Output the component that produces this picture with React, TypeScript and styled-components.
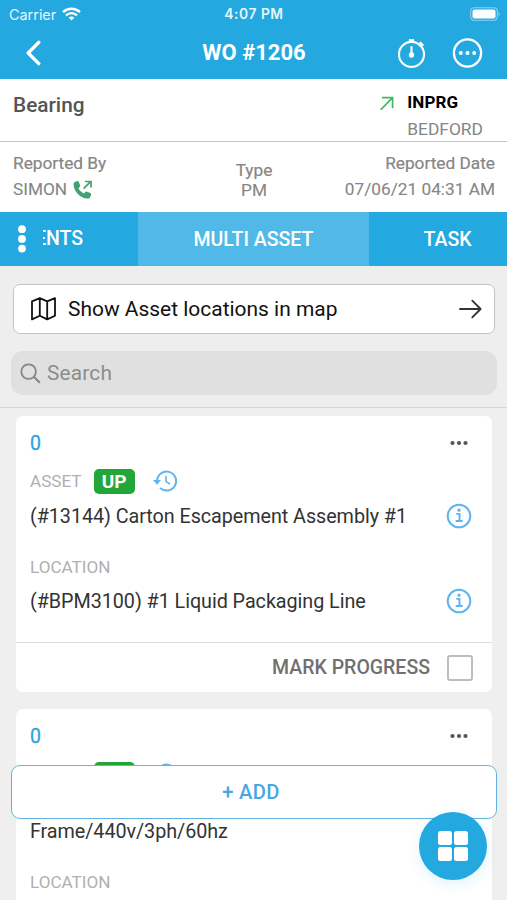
import React from "react";
import styled, { createGlobalStyle } from "styled-components";

const BLUE = "#24a8e0";
const LIGHT_BLUE = "#51b9e8";

const GlobalStyle = createGlobalStyle`
  *, *::before, *::after { box-sizing: border-box; }
  body { margin: 0; background: #efefef; font-family: Roboto, sans-serif; }
  svg { display: block; flex: none; }
  button { font: inherit; padding: 0; border: 0; background: none; color: inherit; }
`;

const Screen = styled.div`
  position: relative;
  display: flex;
  flex-direction: column;
  width: 507px;
  height: 900px;
  overflow: hidden;
  background: #efefef;

  > * {
    flex-shrink: 0;
  }
`;

const StatusBar = styled.div`
  display: grid;
  grid-template-columns: 1fr auto 1fr;
  align-items: center;
  height: 27px;
  padding: 0 6px 0 9px;
  background: ${BLUE};
  color: #e6f6fd;
  font-family: Inter, sans-serif;
  line-height: 27px;
`;

const Carrier = styled.div`
  display: flex;
  align-items: center;
  gap: 6px;
  font-size: 14.4px;
`;

const Clock = styled.div`
  padding-top: 1px;
  padding-right: 2px;
  font-size: 13.8px;
  font-weight: 600;
  letter-spacing: 0.55px;
`;

const BatterySlot = styled.div`
  justify-self: end;
`;

const NavBar = styled.header`
  display: grid;
  grid-template-columns: 1fr auto 1fr;
  align-items: center;
  height: 52px;
  padding: 0 24px 0 25px;
  background: ${BLUE};
  color: #fff;
`;

const NavTitle = styled.h1`
  margin: 0;
  font-size: 22px;
  font-weight: 700;
  line-height: 50px;
`;

const NavActions = styled.div`
  display: flex;
  justify-content: flex-end;
  gap: 25px;
`;

const Summary = styled.section`
  display: flex;
  justify-content: space-between;
  height: 63px;
  padding: 12px 24px 0 13px;
  background: #fff;
  border-bottom: 1.5px solid #c2c2c2;
`;

const SummaryTitle = styled.h2`
  margin: 0;
  font-size: 20.8px;
  font-weight: 500;
  line-height: 28px;
  color: #555;
`;

const StatusBlock = styled.div`
  display: grid;
  grid-template-columns: 14px auto;
  column-gap: 13px;
  align-items: center;
  align-content: start;
  margin-top: -2px;
`;

const StatusText = styled.strong`
  font-size: 17px;
  line-height: 27px;
  letter-spacing: 0.15px;
  color: #000;
`;

const Site = styled.span`
  grid-column: 2;
  font-size: 17.4px;
  line-height: 26px;
  color: #858585;
`;

const Facts = styled.section`
  display: flex;
  justify-content: space-between;
  height: 70px;
  padding: 8px 12px 0 13px;
  background: #fff;
`;

const Fact = styled.div<{ $align: "left" | "center" | "right" }>`
  display: flex;
  flex-direction: column;
  flex: ${(p) => (p.$align === "center" ? "none" : "1 1 0")};
  padding-top: ${(p) => (p.$align === "center" ? "10px" : "0")};
  text-align: ${(p) => p.$align};
  color: #868686;
  font-size: 17.25px;
`;

const FactLabel = styled.span<{ $tight?: boolean }>`
  line-height: ${(p) => (p.$tight ? "20px" : "26px")};
  -webkit-text-stroke: 0.2px currentColor;
`;

const FactValue = styled.span<{ $tight?: boolean }>`
  display: ${(p) => (p.$tight ? "block" : "flex")};
  align-items: center;
  justify-content: inherit;
  gap: 6px;
  line-height: ${(p) => (p.$tight ? "20px" : "27px")};
  -webkit-text-stroke: 0.1px currentColor;
`;

const RightValue = styled(FactValue)`
  justify-content: flex-end;
`;

const Tabs = styled.nav`
  display: flex;
  height: 54px;
  background: ${BLUE};
  color: #fff;
  font-size: 19.5px;
  font-weight: 500;
  line-height: 56px;
`;

const OverflowTab = styled.div`
  display: flex;
  flex: none;
  align-items: center;
  gap: 17px;
  width: 138px;
  padding-left: 18px;
`;

const ClippedLabel = styled.span`
  display: flex;
  justify-content: flex-end;
  width: 40px;
  overflow: hidden;
  white-space: nowrap;
`;

const Tab = styled.div<{ $width: number; $active?: boolean }>`
  flex: none;
  width: ${(p) => p.$width}px;
  text-align: center;
  background: ${(p) => (p.$active ? LIGHT_BLUE : BLUE)};
`;

const Tools = styled.section`
  display: flex;
  flex-direction: column;
  gap: 17px;
  height: 142px;
  padding: 18px 10px 0 11px;
  border-bottom: 1.5px solid #d6d6d6;
  background: #eee;
`;

const MapButton = styled.button`
  display: flex;
  align-items: center;
  height: 50px;
  margin: 0 2px 0 1.5px;
  padding: 0 12px 0 17.5px;
  border: 1.5px solid #c4c4c4;
  border-radius: 7px;
  background: #fff;
  color: #111;
`;

const MapLabel = styled.span`
  flex: 1;
  margin-left: 12px;
  font-size: 20.95px;
  text-align: left;
`;

const SearchBox = styled.div`
  display: flex;
  align-items: center;
  gap: 6px;
  height: 44px;
  padding-left: 9px;
  border-radius: 12px;
  background: #e0e0e0;
  color: #8c8c8c;
  font-size: 20.8px;
  line-height: 46px;
  letter-spacing: 0.2px;
`;

const AssetList = styled.main`
  display: flex;
  flex-direction: column;
  gap: 17px;
  padding: 8px 15px 0 16px;
`;

const Card = styled.article`
  flex: none;
  border-radius: 7px;
  background: #fff;
`;

const CardBody = styled.div`
  display: flex;
  flex-direction: column;
  height: 226px;
  padding: 12px 20px 0 14px;
`;

const TallCardBody = styled(CardBody)`
  height: 250px;
`;

const CardTop = styled.div`
  display: flex;
  align-items: center;
  justify-content: space-between;
  height: 30px;
  padding-right: 4px;
  color: #2ea3dc;
  font-size: 19.5px;
  -webkit-text-stroke: 0.3px currentColor;
`;

const AssetRow = styled.div`
  display: flex;
  align-items: center;
  height: 26px;
  margin-top: 10px;
`;

const FieldLabel = styled.span`
  font-size: 17.1px;
  line-height: 24px;
  color: #b0b0b0;
`;

const LocationLabel = styled(FieldLabel)`
  margin-top: 26px;
`;

const UpBadge = styled.span`
  width: 41px;
  height: 25px;
  margin: 0 18px 0 12px;
  border-radius: 5px;
  background: #21a637;
  color: #fff;
  font-size: 19px;
  font-weight: 700;
  line-height: 25px;
  text-align: center;
`;

const FieldValue = styled.div<{ $gap: number; $lines?: number }>`
  display: flex;
  align-items: flex-end;
  justify-content: space-between;
  height: ${(p) => (p.$lines === 2 ? 47 : 24)}px;
  margin-top: ${(p) => p.$gap}px;
  font-size: 19.75px;
  line-height: 24px;
  letter-spacing: -0.05px;
  color: #333;
`;

const ProgressRow = styled.div`
  display: flex;
  align-items: center;
  justify-content: flex-end;
  gap: 17px;
  height: 50px;
  padding-right: 19px;
  border-top: 1px solid #ddd;
  color: #707070;
  font-size: 19.5px;
  font-weight: 500;
`;

const Checkbox = styled.span`
  width: 26px;
  height: 26px;
  border: 2px solid #bdbdbd;
  border-radius: 3px;
`;

const AddButton = styled.button`
  position: absolute;
  left: 11px;
  right: 10px;
  top: 765px;
  height: 54px;
  padding-right: 6px;
  border: 1.4px solid #63b3e2;
  border-radius: 9px;
  background: #fff;
  color: #4aa7dd;
  font-size: 20.2px;
  font-weight: 500;
  letter-spacing: 0.3px;
  text-align: center;
`;

const MenuFab = styled.button`
  position: absolute;
  left: 419px;
  top: 812px;
  display: grid;
  place-items: center;
  width: 68px;
  height: 68px;
  border-radius: 50%;
  background: ${BLUE};
  box-shadow: 0 4px 14px rgba(36, 168, 224, 0.14);
`;

const WifiIcon = () => (
  <svg width="19" height="14" viewBox="0 0 19 14" fill="none" stroke="#fff" strokeWidth="2.3">
    <path d="M1 5.2C5.8.6 13.2.6 18 5.2M4 8.4c3.2-3 7.8-3 11 0" />
    <path d="M6.6 10.6c1.7-1.5 4.1-1.5 5.8 0L9.5 13.5z" fill="#fff" stroke="none" />
  </svg>
);

const BatteryIcon = () => (
  <svg width="31" height="14" viewBox="0 0 31 14">
    <rect x=".7" y=".7" width="26.6" height="12.6" rx="3.5" fill="none" stroke="#8bd1ef" strokeWidth="1.1" />
    <rect x="2.5" y="2.5" width="23" height="9" rx="2" fill="#fff" />
    <path d="M28.5 5c1.6.7 1.6 3.3 0 4z" fill="#8bd1ef" />
  </svg>
);

const BackIcon = () => (
  <svg width="18" height="26" viewBox="0 0 18 26" fill="none" stroke="#fff" strokeWidth="3.4" strokeLinecap="round" strokeLinejoin="round">
    <path d="M13.8 2.4 3.2 13l10.6 10.6" />
  </svg>
);

const StopwatchIcon = () => (
  <svg width="30" height="32" viewBox="0 0 30 32" fill="none" stroke="#fff" strokeWidth="2.1" strokeLinecap="round">
    <circle cx="14.5" cy="17.4" r="12.5" />
    <path d="M14.5 10v7.6M12.8 3.1h3.4M22.9 8.4l1.6-1.6M23.4 5.7l2.3 2.3M14.5 3v2" />
    <circle cx="14.5" cy="18" r="1.6" fill="#fff" />
  </svg>
);

const MoreCircleIcon = () => (
  <svg width="31" height="32" viewBox="0 0 31 32">
    <circle cx="15.5" cy="16" r="13.6" fill="none" stroke="#fff" strokeWidth="2.3" />
    <g fill="#fff">
      <circle cx="8.8" cy="16" r="2" />
      <circle cx="15.5" cy="16" r="2" />
      <circle cx="22.2" cy="16" r="2" />
    </g>
  </svg>
);

const DiagonalArrowIcon = () => (
  <svg width="14" height="15" viewBox="0 0 14 15" fill="none" stroke="#3dba5c" strokeWidth="1.7">
    <path d="M.7 14.8 12.5 2.6M2 2.600h10.600v10.700" />
  </svg>
);

const CallIcon = () => (
  <svg width="20" height="20" viewBox="0 0 20 20">
    <path
      d="M2.3 1.8 4 1.2c.8-.3 1.4 0 1.8.8l1.3 3.2c.3.7.1 1.2-.4 1.7L5.5 8.2c1.1 2.3 3 4.1 5.400 5.300l1.500-1.500c.5-.5 1-.6 1.700-.3l3.200 1.400c.8.4 1 1 .7 1.800l-.8 2.200c-.4 1.100-1.500 1.700-3 1.500C7.500 18 1.100 12 .5 4.700c-.1-1.500.6-2.500 1.800-2.900z"
      fill="#43a273"
    />
    <path d="m10.6 8.7 7-7M12 1.5h6v6" fill="none" stroke="#43a273" strokeWidth="1.7" />
  </svg>
);

const VerticalDotsIcon = () => (
  <svg width="8" height="28" viewBox="0 0 8 28" fill="#fff">
    <circle cx="4" cy="4.2" r="3.9" />
    <circle cx="4" cy="13.9" r="3.9" />
    <circle cx="4" cy="23.6" r="3.9" />
  </svg>
);

const MapIcon = () => (
  <svg width="25" height="24" viewBox="0 0 25 24" fill="none" stroke="#111" strokeWidth="1.8" strokeLinejoin="round">
    <path d="M1 4.4 8.8 1.2l7.4 3.2L24 1.2v17.6l-7.8 3.600-7.400-3.600L1 22.400zM8.800 1.200v17.600M16.200 4.400v18" />
  </svg>
);

const ArrowRightIcon = () => (
  <svg width="23" height="20" viewBox="0 0 23 20" fill="none" stroke="#333" strokeWidth="1.9" strokeLinecap="round" strokeLinejoin="round">
    <path d="M1 10h20.500M13.300 1.700 21.600 10l-8.300 8.300" />
  </svg>
);

const SearchIcon = () => (
  <svg width="21" height="21" viewBox="0 0 21 21" fill="none" stroke="#858585" strokeWidth="1.8">
    <circle cx="8.6" cy="8.6" r="7.3" />
    <path d="m13.8 13.8 6 6" strokeWidth="2.1" />
  </svg>
);

const HistoryIcon = () => (
  <svg width="25" height="22" viewBox="0 0 25 22" fill="none" stroke="#5db4ef" strokeWidth="2">
    <path d="M4.1 11A9.5 9.5 0 1 1 7 17.900" />
    <path d="M0 10h8L4 14.800z" fill="#5db4ef" stroke="none" />
    <path d="M13 6v5.600l4 2.400" strokeWidth="1.6" />
  </svg>
);

const InfoIcon = () => (
  <svg width="26" height="26" viewBox="0 0 26 26" fill="none" stroke="#5db4ef">
    <circle cx="13" cy="13" r="11.3" strokeWidth="2" />
    <path d="M10.3 10.900h3.200v7M9.700 18h7" strokeWidth="1.9" />
    <circle cx="13" cy="7.2" r="1.6" fill="#5db4ef" stroke="none" />
  </svg>
);

const DotsIcon = () => (
  <svg width="18" height="6" viewBox="0 0 18 6" fill="#555">
    <circle cx="2.5" cy="3" r="2.1" />
    <circle cx="9" cy="3" r="2.1" />
    <circle cx="15.5" cy="3" r="2.1" />
  </svg>
);

const GridIcon = () => (
  <svg width="30" height="30" viewBox="0 0 30 30" fill="#fff">
    <rect x="0" y="0" width="14" height="14" rx="2.5" />
    <rect x="16" y="0" width="14" height="14" rx="2.5" />
    <rect x="0" y="16" width="14" height="14" rx="2.5" />
    <rect x="16" y="16" width="14" height="14" rx="2.5" />
  </svg>
);

const CardHeading = () => (
  <>
    <CardTop>
      <span>0</span>
      <DotsIcon />
    </CardTop>
    <AssetRow>
      <FieldLabel>ASSET</FieldLabel>
      <UpBadge>UP</UpBadge>
      <HistoryIcon />
    </AssetRow>
  </>
);

export default function App() {
  return (
    <>
      <GlobalStyle />
      <Screen>
        <StatusBar>
          <Carrier>
            <span>Carrier</span>
            <WifiIcon />
          </Carrier>
          <Clock>4:07 PM</Clock>
          <BatterySlot>
            <BatteryIcon />
          </BatterySlot>
        </StatusBar>
        <NavBar>
          <BackIcon />
          <NavTitle>WO #1206</NavTitle>
          <NavActions>
            <StopwatchIcon />
            <MoreCircleIcon />
          </NavActions>
        </NavBar>
        <Summary>
          <SummaryTitle>Bearing</SummaryTitle>
          <StatusBlock>
            <DiagonalArrowIcon />
            <StatusText>INPRG</StatusText>
            <Site>BEDFORD</Site>
          </StatusBlock>
        </Summary>
        <Facts>
          <Fact $align="left">
            <FactLabel>Reported By</FactLabel>
            <FactValue>
              SIMON
              <CallIcon />
            </FactValue>
          </Fact>
          <Fact $align="center">
            <FactLabel $tight>Type</FactLabel>
            <FactValue $tight>PM</FactValue>
          </Fact>
          <Fact $align="right">
            <FactLabel>Reported Date</FactLabel>
            <RightValue>07/06/21 04:31 AM</RightValue>
          </Fact>
        </Facts>
        <Tabs>
          <OverflowTab>
            <VerticalDotsIcon />
            <ClippedLabel>ENTS</ClippedLabel>
          </OverflowTab>
          <Tab $width={231} $active>
            MULTI ASSET
          </Tab>
          <Tab $width={157}>TASK</Tab>
        </Tabs>
        <Tools>
          <MapButton>
            <MapIcon />
            <MapLabel>Show Asset locations in map</MapLabel>
            <ArrowRightIcon />
          </MapButton>
          <SearchBox>
            <SearchIcon />
            <span>Search</span>
          </SearchBox>
        </Tools>
        <AssetList>
          <Card>
            <CardBody>
              <CardHeading />
              <FieldValue $gap={11}>
                (#13144) Carton Escapement Assembly #1
                <InfoIcon />
              </FieldValue>
              <LocationLabel>LOCATION</LocationLabel>
              <FieldValue $gap={11}>
                (#BPM3100) #1 Liquid Packaging Line
                <InfoIcon />
              </FieldValue>
            </CardBody>
            <ProgressRow>
              MARK PROGRESS
              <Checkbox />
            </ProgressRow>
          </Card>
          <Card>
            <TallCardBody>
              <CardHeading />
              <FieldValue $gap={10} $lines={2}>
                Frame/440v/3ph/60hz
              </FieldValue>
              <LocationLabel>LOCATION</LocationLabel>
            </TallCardBody>
          </Card>
        </AssetList>
        <AddButton>+ ADD</AddButton>
        <MenuFab>
          <GridIcon />
        </MenuFab>
      </Screen>
    </>
  );
}
